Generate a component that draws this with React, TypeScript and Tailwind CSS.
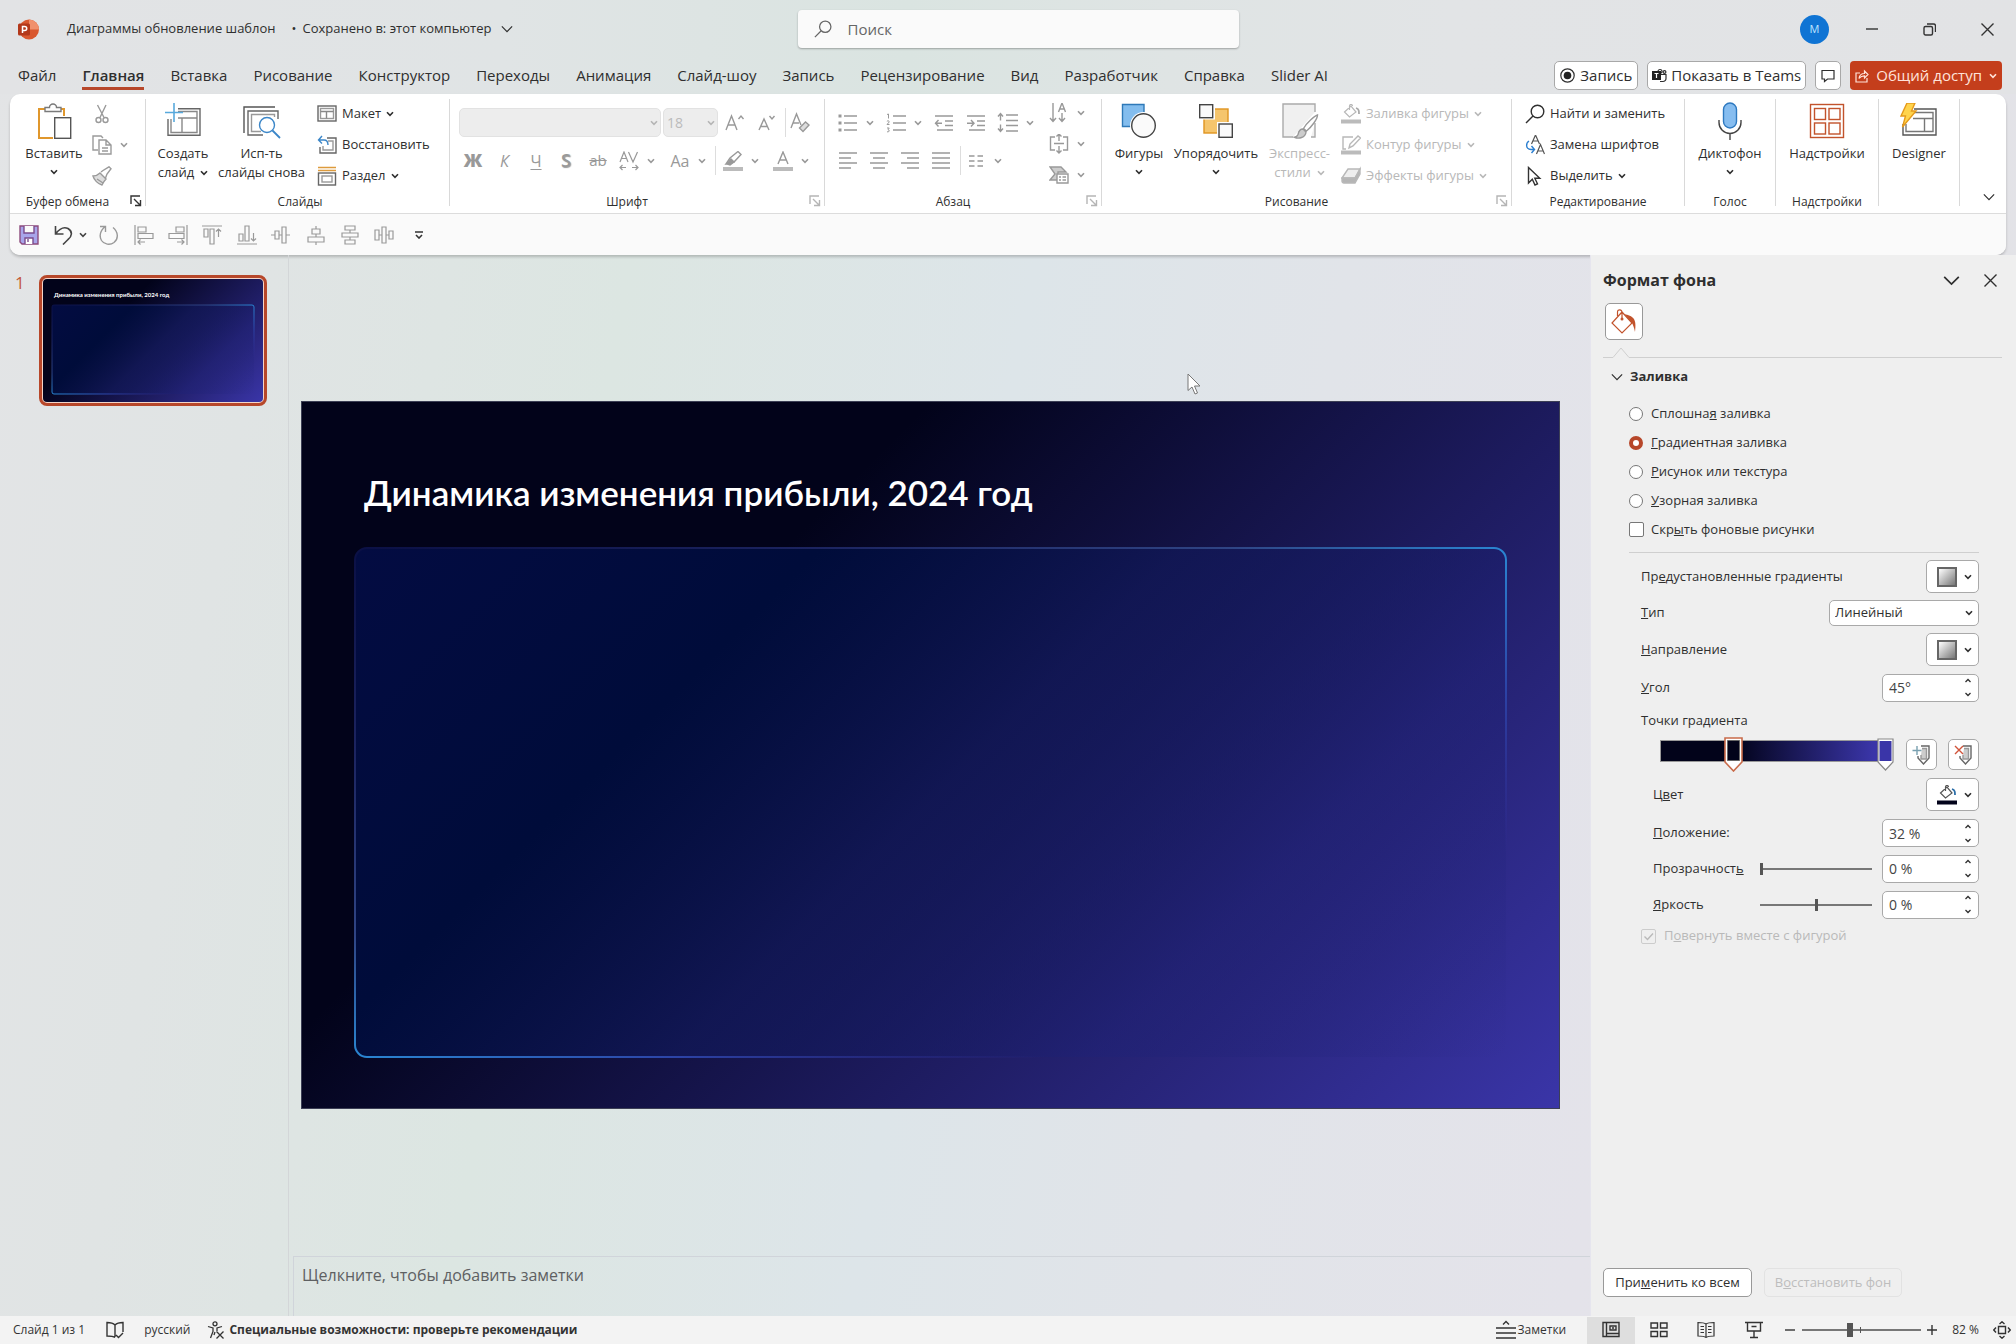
import type { ReactNode } from "react";

type IconProps = { size?: number; h?: number; className?: string; children?: ReactNode };

const Svg = ({ size = 20, h, className = "", children }: IconProps) => (
  <svg
    width={size}
    height={h ?? size}
    viewBox={`0 0 ${size} ${h ?? size}`}
    fill="none"
    stroke="currentColor"
    strokeWidth="1.4"
    className={`shrink-0 ${className}`}
    aria-hidden="true"
  >
    {children}
  </svg>
);

const Chevron = ({ className = "" }: { className?: string }) => (
  <Svg size={8} h={6} className={className}>
    <path d="M1 1.2 4 4.4 7 1.2" strokeWidth="1.6" />
  </Svg>
);

const TinyChevron = ({ up = false }: { up?: boolean }) => (
  <Svg size={6} h={5}>
    <path d={up ? "M.5 4 3 1.500 5.500 4" : "M.5 1 3 3.500 5.500 1"} strokeWidth="1.3" />
  </Svg>
);

const BigChevron = ({ size = 14 }: { size?: number }) => (
  <svg width={size} height={size} viewBox="0 0 14 14" fill="none" stroke="currentColor" strokeWidth="1.4" aria-hidden="true">
    <path d="M1 4l6 6 6-6" />
  </svg>
);

const Launcher = ({ dark = false }: { dark?: boolean }) => (
  <button aria-label="Параметры группы" className={dark ? "text-[#333]" : "text-[#b5b5b5]"}>
    <Svg size={12}>
      <path d="M1 9V1h9M4 4l6 6M10.500 5v5.500H5" />
    </Svg>
  </button>
);

/* ---------- large icons ---------- */

const PasteIcon = () => (
  <Svg size={36}>
    <path d="M9 6H3v29h14M23 6h5v7" stroke="#e0972c" strokeWidth="2" />
    <path d="M9 8.500V4.500h4.500a3.500 3.500 0 0 1 7 0H25v4z" stroke="#7a7a7a" fill="#fff" />
    <rect x="18.700" y="14.700" width="16" height="20.600" fill="#fff" stroke="#555" />
  </Svg>
);

const NewSlideIcon = () => (
  <Svg size={36}>
    <path d="M13 5.700h22v26.600H3V16" stroke="#666" />
    <path d="M13 8.500h19v21H6V16M17 15v14M13 15h19" stroke="#888" />
    <path d="M9 0v19M0 9.500h18" stroke="#58a9dc" strokeWidth="1.600" />
  </Svg>
);

const ReuseIcon = () => (
  <Svg size={38} h={36}>
    <path d="M1 30V4h31" stroke="#555" />
    <path d="M20 32H5V8h30v8" stroke="#666" />
    <path d="M18 28.500H8.500V11.500h23V14" stroke="#999" />
    <circle cx="24" cy="22" r="7.500" stroke="#3b86c8" fill="#fff" />
    <path d="M29.500 27.500 37 35" stroke="#3b86c8" strokeWidth="1.800" />
  </Svg>
);

const ShapesIcon = () => (
  <Svg size={36}>
    <path d="M23 13V1.500H1.500v22H12" fill="#83bdee" stroke="#2e79b8" />
    <circle cx="22.500" cy="22.500" r="13.500" fill="#fff" stroke="none" />
    <circle cx="22.500" cy="22.500" r="11.800" fill="#fafafa" stroke="#444" />
  </Svg>
);

const ArrangeIcon = () => (
  <Svg size={36}>
    <rect x="6" y="6" width="24" height="24" fill="#f5c56d" stroke="#e09420" />
    <rect x="1.500" y="1" width="14" height="14" fill="#fff" stroke="#fff" strokeWidth="3" />
    <rect x="20.500" y="20.500" width="14" height="14" fill="#fff" stroke="#fff" strokeWidth="3" />
    <rect x="1.700" y="1.700" width="13" height="13" fill="#fafafa" stroke="#444" />
    <rect x="21" y="21" width="13.300" height="13.300" fill="#fafafa" stroke="#444" />
  </Svg>
);

const QuickStylesIcon = () => (
  <Svg size={38} h={36}>
    <path d="M34 20v14h-4M12 34H2V1h32v8" fill="#f0f0f0" stroke="#aaa" />
    <path d="M36.500 12c-3 1-11 8-14 13.500l3 2.500c5-4 11-12 11-16z" fill="#fff" stroke="#999" />
    <path d="M22 26c-4 0-4.500 3-5 5.500-.5 1.500-2 2.500-3.500 2.800 4 1.700 11 .7 11.500-5.300z" fill="#ccc" stroke="#999" />
  </Svg>
);

const MicIcon = () => (
  <Svg size={26} h={38}>
    <rect x="6.500" y="1" width="13" height="25" rx="6.500" fill="#86bdf0" stroke="#2e79c0" />
    <path d="M2 18v2.500a11 11 0 0 0 22 0V18M13 31.500V38" stroke="#444" />
  </Svg>
);

const AddinsIcon = () => (
  <Svg size={36}>
    <rect x="1.500" y="1.500" width="33" height="33" stroke="#c2532c" />
    <rect x="5.500" y="5.500" width="11" height="11" stroke="#c2532c" />
    <rect x="20" y="5.500" width="11" height="11" stroke="#c2532c" />
    <rect x="5.500" y="20" width="11" height="11" stroke="#c2532c" />
    <rect x="20" y="20" width="11" height="11" stroke="#c2532c" />
  </Svg>
);

const DesignerIcon = () => (
  <Svg size={38} h={36}>
    <path d="M14 6h22v26H3V21" stroke="#555" />
    <path d="M14 9.500h19v19H6V21M13 15.500h20M24.500 15.500v13" stroke="#777" />
    <path d="M7 0h8l-3.500 8H16L2.500 24l3-11H1z" fill="#ffd44d" stroke="#e59a1c" />
  </Svg>
);

/* ---------- small icons ---------- */

const ScissorsIcon = () => (
  <Svg size={20}>
    <path d="M5.500 1 12 13.500M14 1 8 13.500" />
    <circle cx="6.500" cy="16" r="2.500" />
    <circle cx="13.500" cy="16" r="2.500" />
  </Svg>
);

const CopyIcon = () => (
  <Svg size={20}>
    <path d="M6 15H1V1h8l2 2" />
    <path d="M7 5h7l5 5v9H7zM14 5v5h5M10 13h6M10 16h6" />
  </Svg>
);

const BrushIcon = () => (
  <Svg size={20}>
    <path d="M1 10c3 0 5-1 7-3l6 6c-2 2-3 4-4 6-4-1-8-5-9-9z" fill="#ddd" />
    <path d="M9 6l2-1.500L17 .8l2 2-4 5.200-1.500 4M5 13l6 4" />
  </Svg>
);

const LayoutIcon = () => (
  <Svg size={20} className="text-[#666]">
    <rect x="1" y="2" width="18" height="15" />
    <rect x="3.500" y="4.500" width="13" height="10" stroke="#999" />
    <path d="M3.500 7.500h13M9.500 7.500v7" stroke="#888" />
  </Svg>
);

const ResetIcon = () => (
  <Svg size={20} className="text-[#666]">
    <path d="M10 3h9v15H3v-6" />
    <path d="M11 6h5v9H6v-4" stroke="#999" />
    <path d="M2 5h5c3 0 4 2 4 5M5 1 1.500 5 5 8.500" stroke="#3b86c8" />
  </Svg>
);

const SectionIcon = () => (
  <Svg size={20} className="text-[#666]">
    <path d="M1 1.500h18M1 4.500h18" stroke="#dd9b3d" />
    <rect x="1.500" y="7" width="17" height="12" />
    <rect x="5" y="10" width="10" height="6" stroke="#999" />
  </Svg>
);

const EraserA = () => (
  <Svg size={22}>
    <path d="M2 16 7.500 2 12 13M4 11h6" />
    <path d="m10.500 16 6-6 3.500 3-6 6.500z" fill="#ddd" />
  </Svg>
);

const BulletsIcon = () => (
  <Svg size={20}>
    <path d="M6 3h13M6 10h13M6 17h13" />
    <path d="M.5 3h3M.5 10h3M.5 17h3" strokeWidth="3" />
  </Svg>
);

const NumberingIcon = () => (
  <Svg size={20}>
    <path d="M7 3h13M7 10h13M7 17h13" />
    <path d="M1 1.500 2.500 1v4.500M1 8.500c0-1 2.500-1 2.200.5L1 11.500h2.500M1 15h2.200L2 16.800c2 0 1.700 2.500-1 2" strokeWidth="1" />
  </Svg>
);

const IndentIcon = ({ increase = false }: { increase?: boolean }) => (
  <Svg size={20}>
    <path d="M1 3h18M11 8h8M11 12.500h8M3 17h16" />
    {increase ? <path d="M1 10.200h7M5 7l3 3.200-3 3.200" /> : <path d="M8 10.200H1M4.500 7l-3 3.200 3 3.200" />}
  </Svg>
);

const LineSpacingIcon = () => (
  <Svg size={22}>
    <path d="M9 3h12M9 8.500h12M9 13.500h12M9 19h12M3.500 1.500v7M1 4.500l2.500-3 2.500 3M3.500 12.500v7M1 16.500l2.500 3 2.500-3" />
  </Svg>
);

const alignPaths = {
  left: "M1 2h18M1 7h12M1 12h18M1 17h12",
  center: "M1 2h18M4 7h12M1 12h18M4 17h12",
  right: "M1 2h18M7 7h12M1 12h18M7 17h12",
  justify: "M1 2h18M1 7h18M1 12h18M1 17h18",
};

const ColumnsIcon = () => (
  <Svg size={18}>
    <path d="M2 4h5.500M2 9h5.500M2 14h5.500M10.500 4H16M10.500 9H16M10.500 14H16" />
  </Svg>
);

const TextDirectionIcon = () => (
  <Svg size={20}>
    <path d="M4 0v18M1 15l3 3.500L7 15M13 10v8M10 15l3 3.500 3-3.500M9.500 9l3.500-9 3.500 9M10.700 6h4.600" />
  </Svg>
);

const AlignTextIcon = () => (
  <Svg size={20}>
    <path d="M6 3H1.500v13H6M14 3h4.500v13H14M5 9.500h10M10 0v7M7.500 2.500 10 0l2.500 2.500M10 12v7M7.500 16.500 10 19l2.500-2.500" />
  </Svg>
);

const SmartArtIcon = () => (
  <Svg size={20}>
    <path d="M1 2h11l5 5H9v8H1l5-6z" fill="#ccc" />
    <path d="M8 9h11v9H8z" fill="#fff" />
    <path d="M10 12h2M13.500 12H17M10 15h2M13.500 15H17" />
  </Svg>
);

const BucketIcon = ({ accent = "#aaa", bar = "#bbb" }: { accent?: string; bar?: string }) => (
  <Svg size={20}>
    <path d="m3.500 8 6.500-6 5 6-6.500 5zM8.500 6V2c0-2 3-2 3 0" strokeWidth="1.200" />
    <path d="M15 4c3 1 3 3 3 6" stroke={accent} strokeWidth="1.800" />
    <path d="M0 17.500h20" stroke={bar} strokeWidth="4" />
  </Svg>
);

const OutlineIcon = () => (
  <Svg size={20}>
    <path d="M12 2H2v12h3M8 13l1-4 8-8 2.500 2L12 11z" />
    <path d="M0 17.500h20" stroke="#bbb" strokeWidth="4" />
  </Svg>
);

const EffectsIcon = () => (
  <Svg size={20}>
    <path d="m1 12 6-9h12l-5 9z" fill="#eee" />
    <path d="M1 12h13l5-9v5l-5 9H3c-1.500 0-2-1-2-2z" fill="#b5b5b5" />
  </Svg>
);

const SearchIcon = ({ size = 20 }: { size?: number }) => (
  <svg width={size} height={size} viewBox="0 0 20 20" fill="none" stroke="currentColor" strokeWidth="1.400" className="shrink-0" aria-hidden="true">
    <circle cx="12.500" cy="7.500" r="6.300" />
    <path d="M8 12 1 19" />
  </svg>
);

const ReplaceFontIcon = () => (
  <Svg size={20} className="text-[#555]">
    <path d="M6.500 9 10.500 0l4 9M8 6h5M11.500 19l4-9.500 4 9.500M13 16h5" strokeWidth="1.200" />
    <path d="M4 6c-3 2-4 8 2 8.500h3M6.500 11l3 3.500-3 3.500" stroke="#2b7fd0" />
  </Svg>
);

const PointerIcon = () => (
  <Svg size={20} className="text-[#333]">
    <path d="M3.500 1.500V17l3.800-3.800 2.700 5.800 2.500-1.200-2.700-5.600h5z" />
  </Svg>
);

/* ---------- shared bits ---------- */

const RibbonGroup = ({
  label,
  launcher,
  className,
  children,
}: {
  label?: string;
  launcher?: "dark" | "light";
  className: string;
  children: ReactNode;
}) => (
  <>
    <section aria-label={label} className={`relative shrink-0 pt-1 ${className}`}>
      <div className="flex h-[93px]">{children}</div>
      <div className={`text-center text-[12px] leading-[21px] ${launcher ? "pr-5" : ""}`}>{label}</div>
      {launcher && (
        <div className="absolute right-[3px] bottom-px">
          <Launcher dark={launcher === "dark"} />
        </div>
      )}
    </section>
    <div className="mt-[5px] mb-[7px] w-px shrink-0 bg-[#d9d9d9]" />
  </>
);

const BigButton = ({
  icon,
  lines,
  below,
  inline,
  disabled,
  className,
}: {
  icon: ReactNode;
  lines: string[];
  below?: boolean;
  inline?: boolean;
  disabled?: boolean;
  className: string;
}) => (
  <button
    disabled={disabled}
    className={`flex shrink-0 flex-col items-center pt-[5px] leading-[19px] whitespace-nowrap ${disabled ? "text-[#b8b8b8]" : ""} ${className}`}
  >
    <span className="mb-[5px] flex h-9 items-center">{icon}</span>
    {lines.map((line, i) => (
      <span key={line} className="flex items-center gap-[6px]">
        {line}
        {inline && i === lines.length - 1 && <Chevron />}
      </span>
    ))}
    {below && <Chevron className="mt-[6px]" />}
  </button>
);

const RowButton = ({ icon, text, chevron, disabled }: { icon: ReactNode; text: string; chevron?: boolean; disabled?: boolean }) => (
  <button disabled={disabled} className={`flex h-[31px] items-center whitespace-nowrap ${disabled ? "text-[#b8b8b8]" : ""}`}>
    <span className="mr-[3px] flex w-6 justify-center">{icon}</span>
    {text}
    {chevron && <Chevron className="ml-[5px]" />}
  </button>
);

const IconButton = ({ label, chevron, className = "w-6", children }: { label: string; chevron?: boolean; className?: string; children: ReactNode }) => (
  <button disabled aria-label={label} className="flex h-[29px] shrink-0 items-center">
    <span className={`flex items-center justify-center ${className}`}>{children}</span>
    {chevron && (
      <span className="flex w-5 justify-center">
        <Chevron />
      </span>
    )}
  </button>
);

/* ---------- title bar and tabs ---------- */

const topBg = "bg-[linear-gradient(90deg,#e2e3e5_0%,#e0e4e5_25%,#dae4e1_45%,#dfe4e4_58%,#e2e4e6_72%,#e2e3e5_100%)]";

const TitleBar = () => (
  <header className={`flex h-[58px] items-center ${topBg}`}>
    <div className="flex flex-1 items-center pl-[18px] text-[13px]">
      <svg width="21" height="21" viewBox="0 0 21 21" aria-hidden="true">
        <circle cx="11" cy="10.500" r="10" fill="#d9582f" />
        <path d="M11 .5a10 10 0 0 1 10 10H11z" fill="#f0906c" />
        <rect y="4.500" width="12" height="12" rx="1.500" fill="#b3381a" />
        <path d="M4.500 14V7.500h2.200a2 2 0 0 1 0 4H4.500" fill="none" stroke="#fff" strokeWidth="1.500" />
      </svg>
      <span className="ml-[28px]">Диаграммы обновление шаблон</span>
      <span className="mr-[6px] ml-4">•</span>
      <button className="flex items-center gap-[10px]">
        Сохранено в: этот компьютер <BigChevron size={12} />
      </button>
    </div>
    <label className="ml-6 flex h-[38px] w-[441px] items-center rounded bg-[#fafafa] pl-4 text-[#666] shadow-[0_1px_2px_rgba(0,0,0,0.3)]">
      <SearchIcon size={18} />
      <input type="search" placeholder="Поиск" aria-label="Поиск" className="ml-4 w-full bg-transparent text-[15px] outline-none placeholder:text-[#666]" />
    </label>
    <div className="flex flex-1 items-center justify-end pr-[22px] text-[#333]">
      <button className="mr-[37px] flex h-[29px] w-[29px] items-center justify-center rounded-full bg-[#0f74d4] text-[11px] text-[#bfe4ff]">M</button>
      <button aria-label="Свернуть" className="mr-[45px] w-3">
        <Svg size={12}><path d="M0 6h12" /></Svg>
      </button>
      <button aria-label="Восстановить окно" className="mr-[45px]">
        <Svg size={13}>
          <rect x="1" y="3.500" width="8.500" height="8.500" rx="1.500" />
          <path d="M4 1h6.500a2 2 0 0 1 2 2v6" />
        </Svg>
      </button>
      <button aria-label="Закрыть">
        <Svg size={13}><path d="m.5.5 12 12M12.500.5l-12 12" /></Svg>
      </button>
    </div>
  </header>
);

const tabs = [
  "Файл", "Главная", "Вставка", "Рисование", "Конструктор", "Переходы", "Анимация", "Слайд-шоу",
  "Запись", "Рецензирование", "Вид", "Разработчик", "Справка", "Slider AI",
];

const TabBar = () => (
  <nav className={`flex h-9 items-start pr-[14px] pl-[18px] text-[15px] ${topBg}`}>
    <div className="flex gap-[26px]">
      {tabs.map((tab) => (
        <button
          key={tab}
          className={`h-[32px] border-b-[3px] leading-[35px] whitespace-nowrap ${tab === "Главная" ? "border-[#b7472a] font-semibold" : "border-transparent"}`}
        >
          {tab}
        </button>
      ))}
    </div>
    <div className="ml-auto flex gap-[9px] pt-[3px]">
      <button className="flex h-[29px] items-center gap-[5px] rounded-[5px] border border-[#a8a8a8] bg-white px-[5px]">
        <Svg size={15}>
          <circle cx="7.500" cy="7.500" r="6.700" strokeWidth="1.200" />
          <circle cx="7.500" cy="7.500" r="3.800" fill="#222" stroke="none" />
        </Svg>
        Запись
      </button>
      <button className="flex h-[29px] items-center gap-[4px] rounded-[5px] border border-[#a8a8a8] bg-white px-[4px] whitespace-nowrap">
        <Svg size={15}>
          <circle cx="8" cy="3.500" r="2" strokeWidth="1.200" />
          <circle cx="12.500" cy="4" r="1.400" strokeWidth="1.200" />
          <path d="M8 6.500h6v4a3 3 0 0 1-3 3H8" strokeWidth="1.200" />
          <rect x="0" y="3" width="9" height="9" fill="#222" stroke="none" />
          <path d="M2.500 5.500h4M4.500 5.500v4.500" stroke="#fff" strokeWidth="1.200" />
        </Svg>
        Показать в Teams
      </button>
      <button aria-label="Примечания" className="flex h-[29px] w-[26px] items-center justify-center rounded-[5px] border border-[#a8a8a8] bg-white">
        <Svg size={14}><path d="M1 1.500h12v8.500H6.500L3.500 12.500V10H1z" strokeWidth="1.200" /></Svg>
      </button>
      <button className="flex h-[29px] items-center gap-[7px] rounded bg-[#c43e1c] px-[5px] whitespace-nowrap text-[#ffe3da]">
        <Svg size={14}><path d="M5 4H1v9h11V9M4 9.500C4.500 6 7 4.500 9.500 4.500V2L13 5.500 9.500 9V6.800C7 6.800 5.500 7.500 4 9.500z" strokeWidth="1.200" /></Svg>
        Общий доступ
        <Chevron />
      </button>
    </div>
  </nav>
);

/* ---------- ribbon ---------- */

const Ribbon = () => (
  <div className="flex h-[119px] overflow-hidden text-[13px]">
    <RibbonGroup label="Буфер обмена" launcher="dark" className="w-[135px]">
      <BigButton icon={<PasteIcon />} lines={["Вставить"]} below className="ml-[6px] w-[76px]" />
      <div className="flex flex-col text-[#9a9a9a]">
        <button disabled aria-label="Вырезать" className="flex h-[31px] items-center"><ScissorsIcon /></button>
        <button disabled aria-label="Копировать" className="flex h-[31px] items-center gap-2"><CopyIcon /><Chevron /></button>
        <button disabled aria-label="Формат по образцу" className="flex h-[31px] items-center"><BrushIcon /></button>
      </div>
    </RibbonGroup>

    <RibbonGroup label="Слайды" className="w-[303px] pl-[5px]">
      <BigButton icon={<NewSlideIcon />} lines={["Создать", "слайд"]} inline className="w-16" />
      <BigButton icon={<ReuseIcon />} lines={["Исп-ть", "слайды снова"]} className="mr-[7px] w-[93px]" />
      <div className="flex flex-col">
        <RowButton icon={<LayoutIcon />} text="Макет" chevron />
        <RowButton icon={<ResetIcon />} text="Восстановить" />
        <RowButton icon={<SectionIcon />} text="Раздел" chevron />
      </div>
    </RibbonGroup>

    <RibbonGroup label="Шрифт" launcher="light" className="w-[374px]">
      <div className="flex flex-col gap-[9px] pt-[10px] text-[#999]">
        <div className="flex items-center pl-[9px]">
          <div className="relative">
            <select disabled aria-label="Шрифт" className="h-[29px] w-[202px] appearance-none rounded-[5px] border border-[#e2e2e2] bg-[#ededed]" />
            <Chevron className="absolute top-[12px] right-[3px] text-[#b5b5b5]" />
          </div>
          <div className="relative ml-[2px]">
            <select disabled aria-label="Размер шрифта" className="h-[29px] w-[55px] appearance-none rounded-[5px] border border-[#e2e2e2] bg-[#ededed] pl-[3px] text-[14px] text-[#bbb]">
              <option>18</option>
            </select>
            <Chevron className="absolute top-[12px] right-[3px] text-[#b5b5b5]" />
          </div>
          <div className="ml-[3px] flex items-center gap-1">
            <IconButton label="Увеличить размер шрифта" className="w-7">
              <Svg size={20}><path d="M1 17 6.500 3 12 17M3 12h7M13.500 6 16 3l2.500 3" /></Svg>
            </IconButton>
            <IconButton label="Уменьшить размер шрифта" className="w-7">
              <Svg size={20}><path d="M2 17 7 6l5 11M3.800 13.500h6.400M12.500 3 15 6l2.500-3" /></Svg>
            </IconButton>
            <span className="h-[29px] w-px bg-[#ddd]" />
            <IconButton label="Удалить форматирование" className="w-5"><EraserA /></IconButton>
          </div>
        </div>
        <div className="flex items-center pl-[7px]">
          <IconButton label="Полужирный" className="w-8 text-[18px] font-extrabold">Ж</IconButton>
          <IconButton label="Курсив" className="w-[31px] text-[16px] italic">К</IconButton>
          <IconButton label="Подчеркнутый" className="w-8 text-[16px] underline underline-offset-2">Ч</IconButton>
          <IconButton label="Тень" className="w-7 text-[18px] font-semibold text-shadow-[1px_1px_1px_#999]">S</IconButton>
          <IconButton label="Зачеркнутый" className="w-9 text-[15px] line-through">ab</IconButton>
          <span className="w-px" />
          <IconButton label="Интервал" chevron>
            <Svg size={20}><path d="M1 11 5 1l4 10M2.500 7.500h5M9.500 1l4.500 10L18.500 1M1 16.500h6M3.500 14 1 16.500 3.500 19M13 16.500h6M16.500 14l2.500 2.500-2.500 2.500" strokeWidth="1.200" /></Svg>
          </IconButton>
          <span className="w-[7px]" />
          <IconButton label="Регистр" chevron className="w-6 text-[16px]">Aa</IconButton>
          <span className="mr-[5px] ml-[3px] h-[29px] w-px bg-[#ddd]" />
          <IconButton label="Цвет выделения" chevron>
            <Svg size={20}>
              <path d="M3 13 7 7l8-6.500 3 3L11 11z" />
              <path d="m4 13 4-5 3 3-4 3z" fill="#999" />
              <path d="M0 18h20" stroke="#bbb" strokeWidth="4" />
            </Svg>
          </IconButton>
          <span className="w-[6px]" />
          <IconButton label="Цвет текста" chevron>
            <Svg size={20}>
              <path d="M5 13 10 1l5 12M6.800 9h6.400" />
              <path d="M0 18h20" stroke="#bbb" strokeWidth="4" />
            </Svg>
          </IconButton>
        </div>
      </div>
    </RibbonGroup>

    <RibbonGroup label="Абзац" launcher="light" className="w-[276px]">
      <div className="flex w-[222px] flex-col gap-[9px] pt-[10px] pl-[11px] text-[#999]">
        <div className="flex items-center gap-1">
          <IconButton label="Маркеры" chevron><BulletsIcon /></IconButton>
          <IconButton label="Нумерация" chevron><NumberingIcon /></IconButton>
          <IconButton label="Уменьшить отступ"><IndentIcon /></IconButton>
          <span />
          <IconButton label="Увеличить отступ"><IndentIcon increase /></IconButton>
          <span />
          <IconButton label="Междустрочный интервал" chevron><LineSpacingIcon /></IconButton>
        </div>
        <div className="flex items-center gap-[7px]">
          <IconButton label="По левому краю"><Svg size={20}><path d={alignPaths.left} /></Svg></IconButton>
          <IconButton label="По центру"><Svg size={20}><path d={alignPaths.center} /></Svg></IconButton>
          <IconButton label="По правому краю"><Svg size={20}><path d={alignPaths.right} /></Svg></IconButton>
          <IconButton label="По ширине"><Svg size={20}><path d={alignPaths.justify} /></Svg></IconButton>
          <div className="flex items-center">
            <span className="mr-[3px] h-[29px] w-px bg-[#ddd]" />
            <IconButton label="Колонки" chevron><ColumnsIcon /></IconButton>
          </div>
        </div>
      </div>
      <div className="flex flex-col gap-[2px] text-[#999]">
        <IconButton label="Направление текста" chevron><TextDirectionIcon /></IconButton>
        <IconButton label="Выровнять текст" chevron><AlignTextIcon /></IconButton>
        <IconButton label="Преобразовать в SmartArt" chevron><SmartArtIcon /></IconButton>
      </div>
    </RibbonGroup>

    <RibbonGroup label="Рисование" launcher="light" className="w-[409px]">
      <BigButton icon={<ShapesIcon />} lines={["Фигуры"]} below className="ml-1 w-[66px]" />
      <BigButton icon={<ArrangeIcon />} lines={["Упорядочить"]} below className="w-[88px]" />
      <BigButton icon={<QuickStylesIcon />} lines={["Экспресс-", "стили"]} inline disabled className="w-[79px]" />
      <div className="flex flex-col">
        <RowButton icon={<BucketIcon />} text="Заливка фигуры" chevron disabled />
        <RowButton icon={<OutlineIcon />} text="Контур фигуры" chevron disabled />
        <RowButton icon={<EffectsIcon />} text="Эффекты фигуры" chevron disabled />
      </div>
    </RibbonGroup>

    <RibbonGroup label="Редактирование" className="w-[172px]">
      <div className="ml-[11px] flex flex-col">
        <RowButton icon={<SearchIcon />} text="Найти и заменить" />
        <RowButton icon={<ReplaceFontIcon />} text="Замена шрифтов" />
        <RowButton icon={<PointerIcon />} text="Выделить" chevron />
      </div>
    </RibbonGroup>

    <RibbonGroup label="Голос" className="w-[90px]">
      <BigButton icon={<MicIcon />} lines={["Диктофон"]} below className="w-full" />
    </RibbonGroup>
    <RibbonGroup label="Надстройки" className="w-[102px]">
      <BigButton icon={<AddinsIcon />} lines={["Надстройки"]} className="w-full" />
    </RibbonGroup>
    <RibbonGroup className="w-[80px]">
      <BigButton icon={<DesignerIcon />} lines={["Designer"]} className="w-full" />
    </RibbonGroup>

    <div className="flex flex-1 items-end justify-end pr-[11px] pb-[10px]">
      <button aria-label="Свернуть ленту"><BigChevron size={12} /></button>
    </div>
  </div>
);

const arrangeTools = [
  { label: "По левому краю", d: "M1 0v20M4 2h8v5H4zM4 8.500h15v5H4zM11 17H4M6.500 14.500 4 17l2.500 2.500" },
  { label: "По правому краю", d: "M19 0v20M16 2H8v5h8zM16 8.500H1v5h15zM9 17h7M13.500 14.500 16 17l-2.500 2.500" },
  { label: "По верхнему краю", d: "M0 1h20M2 4v8h4V4zM8 4v15h4V4zM16.500 12V4M14 6.500 16.500 4 19 6.500" },
  { label: "По нижнему краю", d: "M0 19h20M2 16V9h4v7zM8 16V1h4v15zM16.500 8v8M14 13.500l2.500 2.500 2.500-2.500" },
  { label: "Выровнять по середине", d: "M4 6v8h4V6zM11 2v16h4V2zM0 10h4M8 10h3M15 10h4" },
  { label: "Выровнять по центру", d: "M6 4h8v5H6zM2 12h16v5H2zM10 1v3M10 9v3M10 17v3" },
  { label: "Распределить по вертикали", d: "M5 1h10v4H5zM2 8h16v4H2zM5 15h10v4H5zM10 5v3M10 12v3" },
  { label: "Распределить по горизонтали", d: "M1 5v10h4V5zM8 2v16h4V2zM15 6v8h4V6zM5 10h3M12 10h3" },
];

const QuickAccess = () => (
  <div className="flex h-[42px] items-center border-t border-[#dcdcdc] bg-[#fafafa]">
    <button aria-label="Сохранить" className="ml-px flex w-9 justify-center">
      <Svg size={20}>
        <path d="M1 1h18v18H3l-2-2z" fill="#a9a5ea" stroke="#8c4a7c" />
        <path d="M5 1v7h10V1" fill="#fafafa" stroke="#7a4b8c" />
        <path d="M6 19v-6h8v6" fill="#fff" stroke="#7a4b8c" />
        <path d="M9 14v3" stroke="#7a4b8c" />
      </Svg>
    </button>
    <button aria-label="Отменить" className="flex items-center pl-[7px] text-[#444]">
      <Svg size={20}><path d="M1.500 1v8h8M1.500 9C6 3 10 1.500 14 3.500c5 3 4 8 0 11L9 19.500" strokeWidth="1.600" /></Svg>
      <Chevron className="ml-[5px]" />
    </button>
    <div className="ml-[5px] grid w-[344px] grid-cols-10 text-[#999]">
      <button disabled aria-label="Повторить" className="flex justify-center">
        <Svg size={20}><path d="M14 2.500c5 4 6 11 1 15-4 3-10 2-12.500-2C0 11 1.500 6 5.500 2M1 1.500h5.500V7" /></Svg>
      </button>
      {arrangeTools.map((tool) => (
        <button key={tool.label} disabled aria-label={tool.label} className="flex justify-center">
          <Svg size={20}><path d={tool.d} strokeWidth="1.200" /></Svg>
        </button>
      ))}
      <button aria-label="Настройка панели быстрого доступа" className="flex items-center justify-center text-[#333]">
        <Svg size={10} h={8}><path d="M1 1h8M2 4l3 3 3-3" strokeWidth="1.600" /></Svg>
      </button>
    </div>
  </div>
);

/* ---------- slide ---------- */

const SlideFrame = ({ id, radius }: { id: string; radius: number }) => (
  <svg className="absolute inset-0 h-full w-full overflow-visible" aria-hidden="true">
    <defs>
      <linearGradient id={id} x1="0" y1="0" x2="1" y2="1">
        <stop offset="0" stopColor="#0b1045" />
        <stop offset="0.2" stopColor="#1c2460" />
        <stop offset="0.38" stopColor="#2f4484" />
        <stop offset="0.5" stopColor="#2a86d2" />
        <stop offset="0.64" stopColor="#2c43a6" />
        <stop offset="0.8" stopColor="#3431a0" stopOpacity="0" />
      </linearGradient>
    </defs>
    <rect width="100%" height="100%" rx={radius} fill="none" stroke={`url(#${id})`} strokeWidth={radius > 5 ? 2 : 1} />
  </svg>
);

const slideBg = "bg-[linear-gradient(135deg,#02031a_0%,#02031a_32%,#3a35a8_100%)]";
const panelBg = "bg-[linear-gradient(135deg,#030c42_0%,#000c3a_28%,rgba(17,24,88,0.750)_50%,rgba(30,34,120,0.400)_75%,rgba(40,40,140,0)_100%)]";

const slideTitle = "Динамика изменения прибыли, 2024 год";

const SlideList = () => (
  <aside className="flex w-[289px] shrink-0 items-start border-r border-[#d3d6d8] pt-5 pr-[21px]">
    <span className="w-[39px] pl-[15px] text-[17px] leading-4 text-[#c4593a]">1</span>
    <button aria-label="Слайд 1" className="h-[131px] flex-1 rounded-lg border-[3px] border-[#b7472a] bg-[#f3d5ca] p-px">
      <div className={`flex h-full flex-col overflow-hidden rounded-[4px] text-left ${slideBg}`}>
        <div className="pt-3 pl-[11px] font-[Lato,'Open_Sans',sans-serif] text-[6px] leading-[8px] font-bold whitespace-nowrap text-white">{slideTitle}</div>
        <div className={`relative mx-[9px] mt-[6px] mb-2 flex-1 ${panelBg}`}>
          <SlideFrame id="thumb-frame" radius={2} />
        </div>
      </div>
    </button>
  </aside>
);

const Canvas = () => (
  <main className="relative flex min-w-0 flex-1 flex-col">
    <div className="flex flex-1 items-center pr-[30px] pb-[2px] pl-3">
      <div className={`flex aspect-[1259/708] w-full flex-col border border-[#3c3f55] ${slideBg}`}>
        <h1 className="pt-[63px] pl-[62px] font-[Lato,'Open_Sans',sans-serif] text-[35px] leading-[54px] font-semibold whitespace-nowrap text-white">
          {slideTitle}
        </h1>
        <div className={`relative mx-[53px] mt-[29px] mb-[51px] flex-1 rounded-[12px] ${panelBg}`}>
          <SlideFrame id="slide-frame" radius={12} />
        </div>
      </div>
    </div>
    <textarea
      aria-label="Заметки"
      placeholder="Щелкните, чтобы добавить заметки"
      className="ml-1 h-[60px] resize-none border-t border-l border-[#d0d4da] pt-[6px] pl-2 text-[16px] outline-none placeholder:text-[#5e6062]"
    />
    <svg width="14" height="22" viewBox="0 0 14 22" className="absolute top-[118px] left-[898px]" aria-hidden="true">
      <path d="M1 1v16.500l4-3.500 3 7 2.500-1-3-7H13z" fill="#fff" stroke="#777" />
    </svg>
  </main>
);

/* ---------- format pane ---------- */

const fillKinds: ReactNode[] = [
  <>Сплошна<u>я</u> заливка</>,
  <><u>Г</u>радиентная заливка</>,
  <><u>Р</u>исунок или текстура</>,
  <><u>У</u>зорная заливка</>,
];

const PaneRow = ({ label, htmlFor, indent, h, children }: { label: ReactNode; htmlFor: string; indent?: boolean; h: string; children: ReactNode }) => (
  <div className={`flex items-center ${h} ${indent ? "pl-3" : ""}`}>
    <label htmlFor={htmlFor} className="whitespace-nowrap">{label}</label>
    {children}
  </div>
);

const DropButton = ({ id, children }: { id: string; children: ReactNode }) => (
  <button id={id} className="ml-auto flex h-[33px] w-[53px] items-center justify-between rounded-[5px] border border-[#a9a9a9] bg-white pr-[6px] pl-[10px]">
    {children}
    <Chevron />
  </button>
);

const GradientSwatch = () => (
  <span className="h-5 w-5 border-2 border-[#666] bg-[linear-gradient(135deg,#fff,#777)]" />
);

const Spinner = ({ id, value }: { id: string; value: string }) => (
  <div className="ml-auto flex h-[28px] w-[97px] shrink-0 items-center rounded-[5px] border border-[#a9a9a9] bg-white pr-[7px] pl-[6px]">
    <input id={id} defaultValue={value} className="w-0 flex-1 bg-transparent text-[14px] text-[#444] outline-none" />
    <div className="flex flex-col gap-[9px]">
      <button aria-label="Больше" className="block"><TinyChevron up /></button>
      <button aria-label="Меньше" className="block"><TinyChevron /></button>
    </div>
  </div>
);

const rangeClass =
  "absolute right-[107px] w-[112px] appearance-none bg-transparent [&::-webkit-slider-runnable-track]:h-[2px] [&::-webkit-slider-runnable-track]:bg-[#777] [&::-webkit-slider-thumb]:-mt-[5px] [&::-webkit-slider-thumb]:h-[12px] [&::-webkit-slider-thumb]:w-[3px] [&::-webkit-slider-thumb]:appearance-none [&::-webkit-slider-thumb]:bg-[#555]";

const StopIcon = ({ remove = false }: { remove?: boolean }) => (
  <Svg size={20} className="text-[#666]">
    <path d="M9 1h8v12l-5.500 6L6 13v-2" />
    <path d="M10 3.500h4.500V14H9v-4" fill="#ccc" stroke="#999" />
    {remove ? <path d="m1 1 8 8M9 1 1 9" stroke="#d0533a" /> : <path d="M5 1v9M.5 5.500h9" stroke="#79a0b0" />}
  </Svg>
);

const FormatPane = () => (
  <aside className="flex w-[426px] shrink-0 flex-col border-l border-[#e6e5ee] bg-[#efefef] pt-[9px] pl-[12px] text-[13px]">
    <div className="flex h-8 items-center pr-[19px]">
      <h2 className="flex-1 text-[16px] font-bold">Формат фона</h2>
      <button aria-label="Параметры области задач" className="mr-[24px]"><BigChevron size={17} /></button>
      <button aria-label="Закрыть область">
        <Svg size={13}><path d="m.5.5 12 12M12.500.5l-12 12" /></Svg>
      </button>
    </div>
    <button aria-label="Заливка" className="mt-[7px] ml-[2px] flex h-[37px] w-[38px] items-center justify-center rounded-[5px] border border-[#999] bg-white">
      <Svg size={26} className="text-[#c2532c]">
        <path d="M11 3 1 14l10 10 10-10zM11 9V3.500C11 0 6.500 0 6.500 3v4" strokeWidth="1.200" />
        <circle cx="11" cy="10" r="1.500" fill="#c2532c" stroke="none" />
        <path d="M13 5c9 2 13 4 11 18-1-5-2-7-3-9z" fill="#c2532c" stroke="none" />
      </Svg>
    </button>
    <div className="mt-[7px] mr-[14px] flex h-[11px] items-end">
      <span className="h-px w-[10px] bg-[#cfcfcf]" />
      <Svg size={16} h={11} className="text-[#cfcfcf]"><path d="M0 10.500 8 1l8 9.500" strokeWidth="1" /></Svg>
      <span className="h-px flex-1 bg-[#cfcfcf]" />
    </div>

    <button className="flex h-[38px] items-center gap-[7px] pl-[8px] font-bold">
      <BigChevron size={12} /> Заливка
    </button>
    <fieldset className="mt-[3px] ml-[26px]">
      {fillKinds.map((kind, i) => (
        <label key={i} className="flex h-[29px] items-center gap-[8px]">
          <input
            type="radio"
            name="fill"
            defaultChecked={i === 1}
            className="h-[14px] w-[14px] appearance-none rounded-full border border-[#777] bg-white checked:border-4 checked:border-[#b7472a]"
          />
          <span>{kind}</span>
        </label>
      ))}
      <label className="flex h-[29px] items-center gap-[7px]">
        <input type="checkbox" className="h-[15px] w-[15px] appearance-none rounded-[2px] border border-[#777] bg-white" />
        <span>Скр<u>ы</u>ть фоновые рисунки</span>
      </label>
    </fieldset>
    <div className="mt-2 mr-[37px] ml-[26px] h-px bg-[#cfcfcf]" />

    <div className="mt-[7px] mr-[37px] ml-[38px] flex flex-col gap-[7px]">
      <PaneRow label={<>Пр<u>е</u>дустановленные градиенты</>} htmlFor="preset" h="h-[33px]">
        <DropButton id="preset"><GradientSwatch /></DropButton>
      </PaneRow>
      <PaneRow label={<><u>Т</u>ип</>} htmlFor="kind" h="h-[26px]">
        <div className="relative ml-auto">
          <select id="kind" className="block h-[26px] w-[150px] appearance-none rounded-[5px] border border-[#a9a9a9] bg-white pl-[5px]">
            <option>Линейный</option>
          </select>
          <Chevron className="pointer-events-none absolute top-[10px] right-[6px]" />
        </div>
      </PaneRow>
      <PaneRow label={<><u>Н</u>аправление</>} htmlFor="direction" h="h-[33px]">
        <DropButton id="direction"><GradientSwatch /></DropButton>
      </PaneRow>
      <PaneRow label={<><u>У</u>гол</>} htmlFor="angle" h="h-[29px]">
        <Spinner id="angle" value="45°" />
      </PaneRow>
      <div className="h-[23px] leading-[22px]">Точки градиента</div>
      <div className="flex h-[31px] items-start">
        <div className="relative mt-px ml-[19px] h-[22px] w-[233px] border border-[#999] bg-[linear-gradient(90deg,#02031a_32%,#3a35a8_92%)]">
          <Svg size={20} h={35} className="absolute -top-[4px] left-[63px] text-[#c96b4a]">
            <path d="M1 1h17v24l-8.500 9L1 25z" fill="#fff" strokeWidth="1.600" />
            <path d="M3.500 3.500h12v20h-12z" fill="#02031a" stroke="#666" strokeWidth="1" />
          </Svg>
          <Svg size={17} h={33} className="absolute -top-[3px] -right-[2px] text-[#888]">
            <path d="M1 1h15v23l-7.500 8L1 24z" fill="#fff" strokeWidth="1.200" />
            <path d="M2.500 3h12v20h-12z" fill="#3a35a8" stroke="none" />
          </Svg>
        </div>
        <button aria-label="Добавить точку градиента" className="ml-auto flex h-[31px] w-[31px] items-center justify-center rounded-[5px] border border-[#a9a9a9] bg-white">
          <StopIcon />
        </button>
        <button aria-label="Удалить точку градиента" className="ml-[11px] flex h-[31px] w-[31px] items-center justify-center rounded-[5px] border border-[#a9a9a9] bg-white">
          <StopIcon remove />
        </button>
      </div>
      <PaneRow label={<>Ц<u>в</u>ет</>} htmlFor="color" h="h-[35px]" indent>
        <DropButton id="color"><span className="text-[#555]"><BucketIcon accent="#2b6ea8" bar="#02031a" /></span></DropButton>
      </PaneRow>
      <PaneRow label={<><u>П</u>оложение:</>} htmlFor="position" h="h-[28px]" indent>
        <Spinner id="position" value="32 %" />
      </PaneRow>
      <PaneRow label={<>Прозрачност<u>ь</u></>} htmlFor="opacity" h="relative h-[29px]" indent>
        <input type="range" aria-label="Прозрачность" defaultValue={0} className={rangeClass} />
        <Spinner id="opacity" value="0 %" />
      </PaneRow>
      <PaneRow label={<><u>Я</u>ркость</>} htmlFor="brightness" h="relative h-[29px]" indent>
        <input type="range" aria-label="Яркость" defaultValue={50} className={rangeClass} />
        <Spinner id="brightness" value="0 %" />
      </PaneRow>
      <label className="flex h-5 items-center gap-2 text-[#b9b9b9]">
        <span className="relative flex">
          <input type="checkbox" disabled defaultChecked className="h-[15px] w-[15px] appearance-none rounded-[2px] border border-[#ccc]" />
          <Svg size={15} className="absolute inset-0"><path d="m3.500 7.500 3 3 5.500-6" /></Svg>
        </span>
        <span>П<u>о</u>вернуть вместе с фигурой</span>
      </label>
    </div>

    <div className="mt-auto mb-[19px] flex gap-3">
      <button className="h-[29px] w-[149px] rounded-[5px] border border-[#999] bg-white whitespace-nowrap">При<u>м</u>енить ко всем</button>
      <button disabled className="h-[29px] w-[138px] rounded-[5px] border border-[#e2e2e2] whitespace-nowrap text-[#bdbdbd]">В<u>о</u>сстановить фон</button>
    </div>
  </aside>
);

/* ---------- status bar ---------- */

const StatusBar = () => (
  <footer className="flex h-[28px] shrink-0 items-center bg-[#f3f3f3] pl-[13px] text-[12px] whitespace-nowrap text-[#333]">
    <span>Слайд 1 из 1</span>
    <button aria-label="Проверка правописания" className="ml-[21px]">
      <Svg size={18}><path d="M9 4v12M9 4C7 2 4 1.500 1 1.500V15c3 0 6 0 8 1.500M9 4c2-2 5-2.500 8-2.500V11M10 14l2.500 2.500L17 12" /></Svg>
    </button>
    <button className="ml-5">русский</button>
    <button className="ml-[17px] flex items-center gap-1 font-bold">
      <Svg size={18}>
        <circle cx="8" cy="2.800" r="2" strokeWidth="1.300" />
        <path d="M1 5.500 6 7v3.500L3.500 17M15 5.500 10 7v3M8 11l-1 3M9.500 10.500l7 7M16.500 10.500l-7 7" strokeWidth="1.300" />
      </Svg>
      Специальные возможности: проверьте рекомендации
    </button>

    <button className="ml-auto flex items-center gap-[2px]">
      <Svg size={20}><path d="M7 4.500 10 1.500l3 3M0 8h20M0 13h20M0 18h20" /></Svg>
      Заметки
    </button>
    <button aria-label="Обычный" className="ml-[21px] flex h-[27px] w-12 items-center justify-center bg-[#dedede]">
      <Svg size={18}><path d="M1 1.500h16v14H1zM4.500 1.500v14M4.500 12.500H17M8 5h6v4H8zM10 7h2" /></Svg>
    </button>
    <button aria-label="Сортировщик слайдов" className="ml-[15px]">
      <Svg size={18}><path d="M1 2h6.500v5H1zM10.500 2H17v5h-6.500zM1 10.500h6.500v5H1zM10.500 10.500H17v5h-6.500z" /></Svg>
    </button>
    <button aria-label="Режим чтения" className="ml-[29px]">
      <Svg size={18}><path d="M9 3v13.500M9 3C7 1.500 4 1.500 1 1.500V15c3 0 6 0 8 1.500M9 3c2-1.500 5-1.500 8-1.500V15c-3 0-6 0-8 1.500M3.500 5.500H7M3.500 8.500H7M3.500 11.500H7M11 5.500h3.500M11 8.500h3.500M11 11.500h3.500" strokeWidth="1.200" /></Svg>
    </button>
    <button aria-label="Показ слайдов" className="ml-[30px]">
      <Svg size={18}><path d="M0 1.500h18M2.500 1.500V10h13V1.500M6.500 5.500h5M9 10v6M5 16.500h8" /></Svg>
    </button>
    <button aria-label="Уменьшить" className="ml-[22px]"><Svg size={10}><path d="M0 5h10" /></Svg></button>
    <div className="relative ml-[7px] flex w-[119px] items-center">
      <input
        type="range"
        aria-label="Масштаб"
        defaultValue={40}
        className="w-full appearance-none bg-transparent [&::-webkit-slider-runnable-track]:h-[2px] [&::-webkit-slider-runnable-track]:bg-[#777] [&::-webkit-slider-thumb]:-mt-[6px] [&::-webkit-slider-thumb]:h-[14px] [&::-webkit-slider-thumb]:w-[6px] [&::-webkit-slider-thumb]:appearance-none [&::-webkit-slider-thumb]:bg-[#555]"
      />
      <span className="absolute left-[58px] h-[6px] w-px bg-[#555]" />
    </div>
    <button aria-label="Увеличить" className="ml-[6px]"><Svg size={10}><path d="M0 5h10M5 0v10" /></Svg></button>
    <button className="ml-[15px]">82 %</button>
    <button aria-label="Вписать слайд" className="mr-[5px] ml-[14px]">
      <Svg size={18}><path d="M5.500 5.500h7v7h-7zM6.500 3 9 .8 11.500 3M6.500 15 9 17.200l2.500-2.200M3 6.500.8 9 3 11.500M15 6.500 17.200 9 15 11.500" /></Svg>
    </button>
  </footer>
);

export default function App() {
  return (
    <div className="flex min-h-screen flex-col bg-[linear-gradient(100deg,#e3e4e6_0%,#e0e4e4_14%,#dce6e2_30%,#dde5e9_48%,#e1e4e9_62%,#e4e3ea_80%,#e2e3e5_100%)] font-['Open_Sans','Noto_Sans',sans-serif] text-[#2f2f2f]">
      <TitleBar />
      <TabBar />
      <div className="mx-[10px] overflow-hidden rounded-[10px] bg-white shadow-[0_2px_3px_rgba(0,0,0,0.200)]">
        <Ribbon />
        <QuickAccess />
      </div>
      <div className="flex flex-1">
        <SlideList />
        <Canvas />
        <FormatPane />
      </div>
      <StatusBar />
    </div>
  );
}
